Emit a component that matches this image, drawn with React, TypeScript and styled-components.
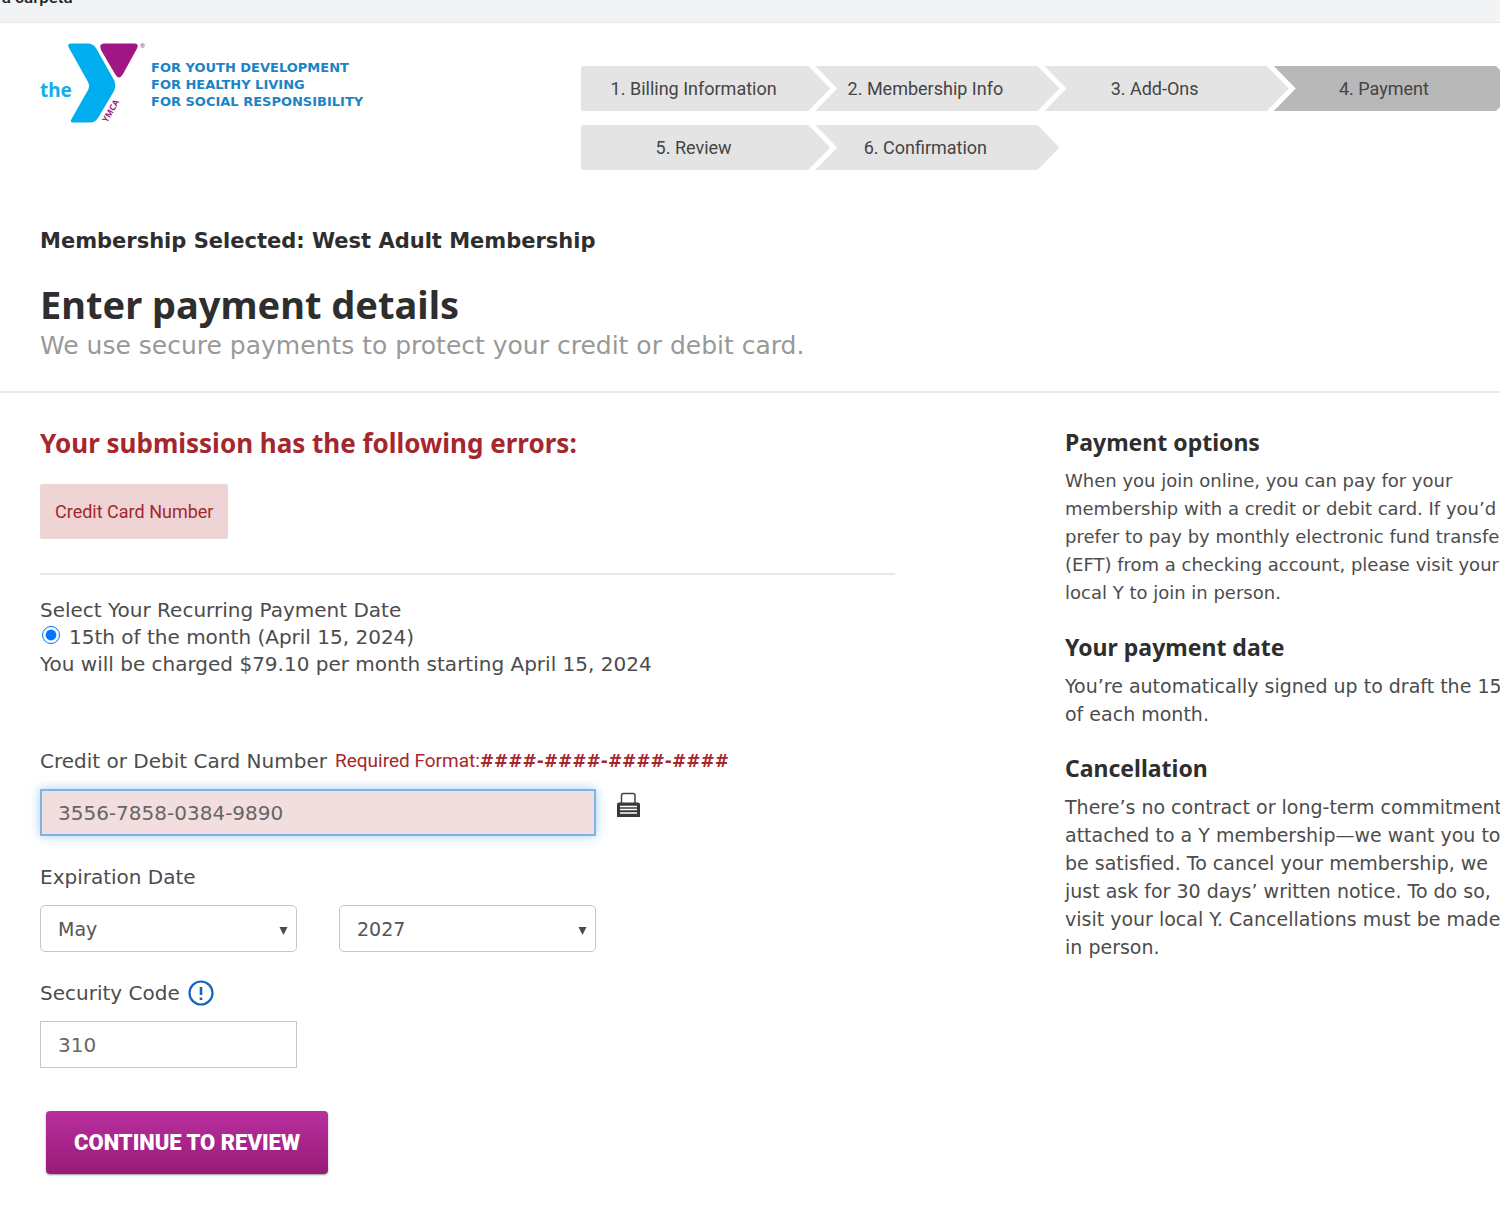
import React, { useState } from "react";
import styled, { createGlobalStyle } from "styled-components";

const BODY = '"DejaVu Sans", Verdana, sans-serif';
const STEP = 'Roboto, "Liberation Sans", sans-serif';
const HEAD = '"Noto Sans", "Open Sans", sans-serif';

const GlobalStyle = createGlobalStyle`
  *, *::before, *::after { box-sizing: border-box; }
  body {
    margin: 0;
    overflow-x: hidden;
    background: #fff;
    color: #4c4c4c;
    font-family: ${BODY};
    font-size: 20px;
    line-height: 28px;
  }
  h1, h2, h3, p, ol, fieldset { margin: 0; padding: 0; }
`;

const Page = styled.div`
  min-width: 1540px;
`;

const BookmarkBar = styled.div`
  height: 23px;
  overflow: hidden;
  display: flex;
  align-items: flex-start;
  background: #f1f3f5;
  border-bottom: 1px solid #e6e8ea;
`;

const Bookmark = styled.span`
  margin: -13px 0 0 -4px;
  font: 500 17px/20px ${STEP};
  color: #222;
`;

const Header = styled.header`
  display: grid;
  grid-template-columns: 541px 1fr;
  padding: 20px 22px 0 40px;
`;

const Brand = styled.a`
  display: flex;
  align-items: flex-start;
  color: #1b83c6;
  text-decoration: none;
`;

const Tagline = styled.span`
  display: flex;
  flex-direction: column;
  padding: 16px 0 0 6px;
  font-size: 13px;
  font-weight: 700;
  line-height: 17px;
`;

const Steps = styled.ol`
  display: grid;
  grid-template-columns: repeat(4, 1fr);
  row-gap: 14px;
  padding: 23px 20px 0 0;
  list-style: none;
`;

const Step = styled.li<{ $first?: boolean; $current?: boolean }>`
  height: 45px;
  margin-right: -20px;
  margin-left: ${(p) => (p.$first ? 0 : 5)}px;
  padding-right: 24px;
  display: flex;
  align-items: center;
  justify-content: center;
  border-radius: ${(p) => (p.$first ? "2px 0 0 2px" : "0")};
  background: ${(p) => (p.$current ? "#b8b8b8" : "#e4e4e4")};
  color: #444;
  font-family: ${STEP};
  font-size: 18px;
  clip-path: ${(p) =>
    p.$first
      ? "polygon(0 0, calc(100% - 22px) 0, 100% 50%, calc(100% - 22px) 100%, 0 100%)"
      : "polygon(0 0, calc(100% - 22px) 0, 100% 50%, calc(100% - 22px) 100%, 0 100%, 22px 50%)"};
`;

const Intro = styled.section`
  padding: 57px 40px 30px;
  border-bottom: 2px solid #e8e8e8;
`;

const Selected = styled.p`
  font-size: 21px;
  font-weight: 700;
  color: #2e2e2e;
`;

const Title = styled.h1`
  margin: 26px 0 4px;
  font: 700 38px/46px ${HEAD};
  color: #2e2e2e;
`;

const Subtitle = styled.p`
  font-size: 25px;
  line-height: 30px;
  color: #999;
`;

const Columns = styled.div`
  display: grid;
  grid-template-columns: 1fr 460px;
  column-gap: 170px;
  padding: 34px 15px 46px 40px;
`;

const ErrorTitle = styled.h2`
  font: 700 26px/32px ${HEAD};
  color: #a5272d;
`;

const ErrorChip = styled.a`
  display: inline-flex;
  align-items: center;
  height: 55px;
  margin-top: 25px;
  padding: 0 15px;
  border-radius: 2px;
  background: #efd4d6;
  color: #a5272d;
  font-family: ${STEP};
  font-size: 18px;
  text-decoration: none;
`;

const Rule = styled.hr`
  height: 0;
  margin: 34px 0 22px;
  border: 0;
  border-top: 2px solid #e8e8e8;
`;

const DateChoice = styled.fieldset`
  min-width: 0;
  margin-bottom: 69px;
  border: 0;
  line-height: 27px;
`;

const Legend = styled.legend`
  padding: 0;
`;

const RadioLabel = styled.label`
  display: flex;
  gap: 9px;
`;

const Radio = styled.input`
  width: 18px;
  height: 18px;
  margin: 2px 0 0 2px;
  accent-color: #0075ff;
`;

const Field = styled.div`
  display: flex;
  flex-direction: column;
  gap: 14px;
  margin-bottom: 27px;
`;

const LabelLine = styled.div`
  display: flex;
  align-items: center;
  gap: 8px;
  height: 28px;
`;

const FormatHint = styled.span`
  font-family: ${STEP};
  font-size: 19px;
  color: #a5272d;
`;

const Mask = styled.b`
  font-family: ${BODY};
  font-size: 17px;
`;

const ControlRow = styled.div`
  display: grid;
  grid-template-columns: 257px 257px;
  column-gap: 42px;
`;

const CardRow = styled.div`
  display: flex;
  align-items: flex-start;
  gap: 20px;
`;

const TextBox = styled.input<{ $error?: boolean }>`
  height: 47px;
  width: ${(p) => (p.$error ? 556 : 257)}px;
  padding: 0 ${(p) => (p.$error ? 16 : 17)}px;
  border: ${(p) => (p.$error ? "2px solid #7db4e8" : "1px solid #c6c6c6")};
  border-radius: 0;
  background: ${(p) => (p.$error ? "#f2dede" : "#fff")};
  box-shadow: ${(p) => (p.$error ? "0 0 10px rgba(102, 175, 233, 0.6)" : "none")};
  color: #666;
  font: 20px/28px ${BODY};
  outline: none;
`;

const SelectBox = styled.div`
  display: grid;
  align-items: center;
  & > * { grid-area: 1 / 1; }
`;

const Select = styled.select`
  appearance: none;
  width: 100%;
  height: 47px;
  padding: 0 17px;
  border: 1px solid #c6c6c6;
  border-radius: 5px;
  background: #fff;
  color: #555;
  font: 19px/28px ${BODY};
`;

const Caret = styled.svg`
  justify-self: end;
  margin: 4px 9px 0 0;
  pointer-events: none;
`;

const HelpButton = styled.button`
  display: flex;
  padding: 0;
  border: 0;
  background: none;
`;

const Printer = styled.svg`
  margin-top: 3px;
`;

const Submit = styled.button`
  height: 63px;
  margin: 16px 0 0 6px;
  padding: 0 28px;
  border: 0;
  border-radius: 4px;
  background: linear-gradient(#b82f9f, #981b76);
  box-shadow: 0 1px 2px rgba(0, 0, 0, 0.4);
  color: #fff;
  font: 900 22px/28px ${STEP};
`;

const Topic = styled.section<{ $compact?: boolean }>`
  margin-bottom: 25px;
  font-size: ${(p) => (p.$compact ? 18 : 19)}px;
`;

const TopicTitle = styled.h3`
  margin-bottom: 10px;
  font: 700 23px/30px ${HEAD};
  color: #2e2e2e;
`;

const steps = ["Billing Information", "Membership Info", "Add-Ons", "Payment", "Review", "Confirmation"];
const months = ["January", "February", "March", "April", "May", "June", "July", "August", "September", "October", "November", "December"];

function Logo() {
  return (
    <svg width="105" height="81" viewBox="0 0 105 81" role="img" aria-label="the YMCA">
      <text x="0" y="54" fontFamily="Noto Sans, sans-serif" fontWeight="700" fontSize="19" fill="#12aeea">the</text>
      <path d="M31 0.500H48Q53 0.500 56 5L74 37Q76.500 42.500 74 48L58 75Q55 79.500 50 79.500H33Q29.500 79.500 31.500 76L48 47Q50 43 48 39L29 5Q26.500 0.500 31 0.500Z" fill="#00adee" />
      <path d="M64 0.500H94Q99.500 0.500 97 5.500L83 31Q79 38 75 31L61 7Q58.500 0.500 64 0.500Z" fill="#a01784" />
      <text transform="translate(67 80) rotate(-60)" fontFamily="Noto Sans, sans-serif" fontWeight="700" fontSize="8.500" fill="#a01784">YMCA</text>
      <text x="100" y="5" fontFamily="Noto Sans, sans-serif" fontSize="6" fill="#a01784">®</text>
    </svg>
  );
}

function PrinterIcon() {
  return (
    <Printer width="25" height="27" viewBox="0 0 25 27" aria-hidden="true">
      <path d="M5.500 11V3.500Q5.500 1.500 7.500 1.500H17Q19 1.500 19 3.500V11" fill="#fff" stroke="#444" strokeWidth="1.500" />
      <path d="M3 10.500H22Q24 10.500 24 12.500V25H1V12.500Q1 10.500 3 10.500Z" fill="#383838" />
      <path d="M4 14.500H21M4 17.500H21M4 21H21" stroke="#fff" strokeWidth="1.500" />
    </Printer>
  );
}

function DropDown({ label, value, options }: { label: string; value: string; options: string[] }) {
  const [current, setCurrent] = useState(value);
  return (
    <SelectBox>
      <Select aria-label={label} value={current} onChange={(e) => setCurrent(e.target.value)}>
        {options.map((o) => <option key={o}>{o}</option>)}
      </Select>
      <Caret width="9" height="9" viewBox="0 0 9 9" aria-hidden="true">
        <path d="M0.500 1H8.500L4.500 9Z" fill="#4a4a4a" />
      </Caret>
    </SelectBox>
  );
}

export default function App() {
  return (
    <Page>
      <GlobalStyle />
      <BookmarkBar><Bookmark>ra carpeta</Bookmark></BookmarkBar>
      <Header>
        <Brand href="#home">
          <Logo />
          <Tagline>
            <span>FOR YOUTH DEVELOPMENT</span>
            <span>FOR HEALTHY LIVING</span>
            <span>FOR SOCIAL RESPONSIBILITY</span>
          </Tagline>
        </Brand>
        <nav aria-label="Progress">
          <Steps>
            {steps.map((name, i) => (
              <Step key={name} $first={i % 4 === 0} $current={i === 3} aria-current={i === 3 ? "step" : undefined}>
                {i + 1}. {name}
              </Step>
            ))}
          </Steps>
        </nav>
      </Header>
      <Intro>
        <Selected>Membership Selected: West Adult Membership</Selected>
        <Title>Enter payment details</Title>
        <Subtitle>We use secure payments to protect your credit or debit card.</Subtitle>
      </Intro>
      <Columns>
        <main>
          <ErrorTitle>Your submission has the following errors:</ErrorTitle>
          <ErrorChip href="#card">Credit Card Number</ErrorChip>
          <Rule />
          <form onSubmit={(e) => e.preventDefault()}>
            <DateChoice>
              <Legend>Select Your Recurring Payment Date</Legend>
              <RadioLabel>
                <Radio type="radio" name="draft" defaultChecked />
                15th of the month (April 15, 2024)
              </RadioLabel>
              <p>You will be charged $79.10 per month starting April 15, 2024</p>
            </DateChoice>
            <Field>
              <LabelLine>
                <label htmlFor="card">Credit or Debit Card Number</label>
                <FormatHint>Required Format:<Mask>####-####-####-####</Mask></FormatHint>
              </LabelLine>
              <CardRow>
                <TextBox id="card" $error defaultValue="3556-7858-0384-9890" />
                <PrinterIcon />
              </CardRow>
            </Field>
            <Field>
              <LabelLine>Expiration Date</LabelLine>
              <ControlRow>
                <DropDown label="Expiration month" value="May" options={months} />
                <DropDown label="Expiration year" value="2027" options={["2024", "2025", "2026", "2027", "2028"]} />
              </ControlRow>
            </Field>
            <Field>
              <LabelLine>
                <label htmlFor="code">Security Code</label>
                <HelpButton type="button" aria-label="About the security code">
                  <svg width="26" height="26" viewBox="0 0 26 26" aria-hidden="true">
                    <circle cx="13" cy="13" r="11.500" fill="none" stroke="#1565c0" strokeWidth="2.200" />
                    <path d="M13 7V15M13 17.500V20" stroke="#1565c0" strokeWidth="2.600" />
                  </svg>
                </HelpButton>
              </LabelLine>
              <TextBox id="code" defaultValue="310" />
            </Field>
            <Submit type="submit">CONTINUE TO REVIEW</Submit>
          </form>
        </main>
        <aside>
          <Topic $compact>
            <TopicTitle>Payment options</TopicTitle>
            <p>When you join online, you can pay for your membership with a credit or debit card. If you’d prefer to pay by monthly electronic fund transfer (EFT) from a checking account, please visit your local Y to join in person.</p>
          </Topic>
          <Topic>
            <TopicTitle>Your payment date</TopicTitle>
            <p>You’re automatically signed up to draft the 15th of each month.</p>
          </Topic>
          <Topic>
            <TopicTitle>Cancellation</TopicTitle>
            <p>There’s no contract or long-term commitment attached to a Y membership—we want you to be satisfied. To cancel your membership, we just ask for 30 days’ written notice. To do so, visit your local Y. Cancellations must be made in{"\u00a0"}person.</p>
          </Topic>
        </aside>
      </Columns>
    </Page>
  );
}
